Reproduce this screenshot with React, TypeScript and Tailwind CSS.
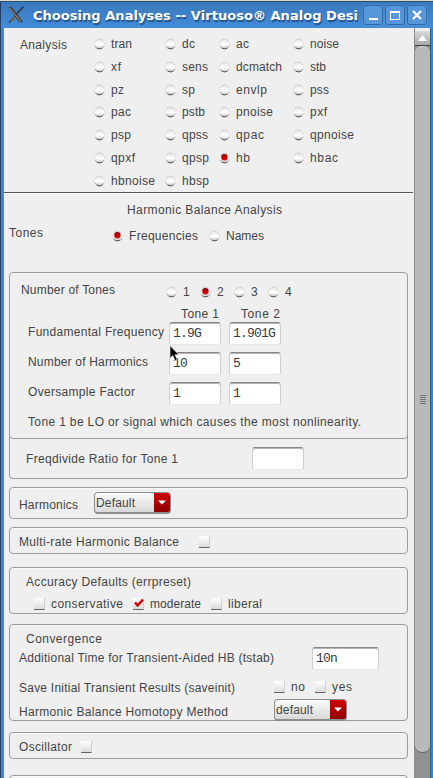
import { useLayoutEffect, useRef, type ReactNode } from "react";

const SANS = "font-['Liberation_Sans',sans-serif] text-[12px] leading-[16px] text-[#444]";
const MONO = "font-['Liberation_Mono',monospace] text-[13px] leading-[18px] tracking-[-0.8px] text-[#3a3a3a]";

/** Single line of text whose tracking is spread to fill the width of its box. */
function Fit({ text, className }: { text: string; className: string }) {
  const box = useRef<HTMLSpanElement>(null);
  const inner = useRef<HTMLSpanElement>(null);
  useLayoutEffect(() => {
    if (!box.current || !inner.current || text.length < 2) return;
    inner.current.style.letterSpacing = "0px";
    const natural = inner.current.getBoundingClientRect().width;
    const gap = (box.current.getBoundingClientRect().width - natural) / (text.length - 1);
    inner.current.style.letterSpacing = `${gap}px`;
  }, [text]);
  return (
    <span ref={box} className={`block shrink-0 whitespace-pre ${className}`}>
      <span ref={inner}>{text}</span>
    </span>
  );
}

function Radio({ on = false }: { on?: boolean }) {
  return (
    <svg className="block h-[12px] w-[11px] shrink-0" viewBox="0 0 11 12">
      <defs>
        <linearGradient id="ball" x1="0" y1="0" x2="0" y2="1">
          <stop offset="0" stopColor="#dcdcdc" />
          <stop offset="0.35" stopColor="#f4f4f4" />
          <stop offset="0.6" stopColor="#ffffff" />
          <stop offset="0.85" stopColor="#dadada" />
          <stop offset="1" stopColor="#9a9a9a" />
        </linearGradient>
        <linearGradient id="dot" x1="0" y1="0" x2="0" y2="1">
          <stop offset="0" stopColor="#8c0000" />
          <stop offset="1" stopColor="#f00000" />
        </linearGradient>
      </defs>
      <circle cx="5.5" cy="5.6" r="5.4" fill="url(#ball)" />
      <path d="M0.5 6.4A5 5 0 0 1 10.5 6.4" fill="none" stroke="#bcbcbc" strokeWidth="0.9" strokeDasharray="1 1" />
      <path d="M0.8 7.8A5.2 5.2 0 0 0 10.2 7.8" fill="none" stroke="#9a9a9a" strokeWidth="0.8" />
      <path d="M2.8 10.2A5.4 5.4 0 0 0 8.2 10.2" fill="none" stroke="#555" strokeWidth="0.9" />
      {on && <circle cx="5.4" cy="5.2" r="3.2" fill="url(#dot)" />}
    </svg>
  );
}

function Check({ on = false, className = "" }: { on?: boolean; className?: string }) {
  return (
    <span
      className={`block h-[12px] w-[11px] shrink-0 border-r border-b border-r-[#d0d0d0] border-b-[#666] bg-linear-to-b from-white to-[#dcdcdc] ${className}`}
    >
      {on && (
        <svg className="block h-[11px] w-[11px]" viewBox="0 0 11 11">
          <path d="M2 4.5L4.6 7.4L10 1.6" fill="none" stroke="#d40000" strokeWidth="2.4" />
        </svg>
      )}
    </span>
  );
}

function Field({ value = "", className }: { value?: string; className: string }) {
  return (
    <div
      className={`h-[23px] shrink-0 rounded-[3px] border border-x-[#cfcfcf] border-t-[#868686] border-b-[#e6e6e6] bg-white pt-[2px] pl-[3px] whitespace-pre shadow-[inset_0_1px_0_#b4b4b4] ${MONO} ${className}`}
    >
      {value}
    </div>
  );
}

function Combo({ value, className, textClass }: { value: string; className: string; textClass: string }) {
  return (
    <div
      className={`flex h-[22px] shrink-0 overflow-hidden rounded-[4px] border border-[#8e8e8e] border-b-2 bg-linear-to-b from-[#fbfbfb] to-[#d9d9d9] ${className}`}
    >
      <div className="min-w-0 flex-1 pt-[2px] pl-[1px]">
        <Fit text={value} className={textClass} />
      </div>
      <div className="flex w-[16px] items-center justify-center bg-linear-to-b from-[#cf0000] to-[#8f0000]">
        <svg className="block h-[5px] w-[8px]" viewBox="0 0 8 5">
          <path d="M0 0.5H8L4 4.5Z" fill="#fff" />
        </svg>
      </div>
    </div>
  );
}

function Group({ className, children }: { className: string; children?: ReactNode }) {
  return (
    <section
      className={`ml-[5px] w-[399px] shrink-0 border border-[#9c9c9c] shadow-[inset_0_1px_0_#f8f8f8] ${className}`}
    >
      {children}
    </section>
  );
}

const analyses: [string, string][][] = [
  [["tran", "w-[21px]"], ["dc", "w-[13px]"], ["ac", "w-[13px]"], ["noise", "w-[29px]"]],
  [["xf", "w-[10px]"], ["sens", "w-[26px]"], ["dcmatch", "w-[46px]"], ["stb", "w-[16px]"]],
  [["pz", "w-[13px]"], ["sp", "w-[13px]"], ["envlp", "w-[31px]"], ["pss", "w-[19px]"]],
  [["pac", "w-[20px]"], ["pstb", "w-[23px]"], ["pnoise", "w-[37px]"], ["pxf", "w-[17px]"]],
  [["psp", "w-[20px]"], ["qpss", "w-[26px]"], ["qpac", "w-[28px]"], ["qpnoise", "w-[44px]"]],
  [["qpxf", "w-[24px]"], ["qpsp", "w-[27px]"], ["hb", "w-[14px]"], ["hbac", "w-[28px]"]],
  [["hbnoise", "w-[44px]"], ["hbsp", "w-[27px]"]],
];

const toneRows: [string, string, string, string][] = [
  ["Fundamental Frequency", "w-[136px]", "1.9G", "1.901G"],
  ["Number of Harmonics", "w-[120px]", "10", "5"],
  ["Oversample Factor", "w-[107px]", "1", "1"],
];

function TitleBar() {
  const button =
    "flex h-[20px] w-[20px] items-center justify-center rounded-[3px] border border-[#2b68a8] bg-[#5796d8] shadow-[0_0_0_1px_rgba(255,255,255,0.08)]";
  return (
    <header className="flex h-[26px] items-start bg-linear-to-b from-[#3a78bb] to-[#438ddb] pt-[3px]">
      <svg className="mt-[1px] ml-[6px] block h-[18px] w-[18px] shrink-0" viewBox="0 0 18 18">
        <path d="M1.2 1.2L4.6 0.9L16 15.5L14.6 16.6L11.6 15.6Z" fill="#3a3a38" />
        <path d="M2.5 1.8L13.8 15.4" stroke="#8d897e" strokeWidth="1.1" />
        <path d="M16.6 0.8L9.6 7.6M8.2 10L2 16.4" stroke="#333" strokeWidth="1.5" />
        <path d="M2.6 16.6L7.2 14.4L8.4 10.6L6.2 10.8Z" fill="#6d6a60" />
      </svg>
      <Fit
        text="Choosing Analyses -- Virtuoso® Analog Desi"
        className="mt-px ml-[8px] w-[325px] font-['DejaVu_Sans',sans-serif] text-[13px] leading-[20px] font-bold text-white [text-shadow:1px_2px_1px_#1f4f86]"
      />
      <div className="ml-[5px] flex gap-[2px]">
        <div className={button}>
          <span className="mt-[8px] block h-[2px] w-[9px] bg-white" />
        </div>
        <div className={button}>
          <span className="block h-[9px] w-[10px] border border-t-2 border-white" />
        </div>
        <div className={button}>
          <svg className="block h-[10px] w-[10px]" viewBox="0 0 10 10">
            <path d="M1 1L9 9M9 1L1 9" stroke="#fff" strokeWidth="2.2" />
          </svg>
        </div>
      </div>
    </header>
  );
}

function ScrollBar() {
  return (
    <div className="flex w-[16px] shrink-0 flex-col border-l border-[#8a8a8a] bg-[#919191]">
      <div className="h-[3px] bg-[#efefef]" />
      <div className="flex h-[15px] items-center justify-center border-b border-[#444] bg-linear-to-b from-[#dadada] to-[#a8a8a8]">
        <svg className="block h-[6px] w-[9px]" viewBox="0 0 9 6">
          <path d="M0 6L4.5 0L9 6Z" fill="#fff" />
        </svg>
      </div>
      <div className="flex h-[707px] flex-col items-center justify-center gap-[1px] rounded-[7px] border-y border-t-[#cfcfcf] border-b-[#666] bg-[#b9b9b9]">
        <span className="block h-px w-[6px] bg-[#777]" />
        <span className="block h-px w-[6px] bg-[#777]" />
        <span className="block h-px w-[6px] bg-[#777]" />
        <span className="block h-px w-[6px] bg-[#777]" />
        <span className="block h-px w-[6px] bg-[#777]" />
      </div>
    </div>
  );
}

export default function App() {
  return (
    <div className="relative flex h-[778px] w-[433px] flex-col overflow-hidden bg-[#3a80cc]">
      <div className="h-px bg-[#d9d5c9]" />
      <div className="h-px bg-[#2a5276]" />
      <div className="flex min-h-0 flex-1 border-l border-[#223f63]">
        <div className="flex w-[432px] shrink-0 flex-col bg-[#3f87d4]">
          <TitleBar />
          <div className={`flex h-[750px] pl-[3px] ${SANS}`}>
            <main className="flex w-[410px] shrink-0 flex-col overflow-hidden bg-[#efefef]">
              <div className="flex h-[164px] shrink-0 items-start pt-[4px]">
                <Fit text="Analysis" className="mt-[5px] ml-[16px] w-[47px]" />
                <div className="ml-[27px] grid grid-cols-[71px_54px_74px_60px] grid-rows-[23px_23px_23px_22px_23px_23px_23px] items-center">
                  {analyses.map((row) =>
                    row.map(([name, width], c) => (
                      <div key={name} className={`flex items-center gap-[6px] ${c === 0 ? "col-start-1" : ""}`}>
                        <Radio on={name === "hb"} />
                        <Fit text={name} className={width} />
                      </div>
                    )),
                  )}
                </div>
              </div>
              <div className="h-[2px] w-[409px] shrink-0 border-t border-b border-t-[#555] border-b-[#fbfbfb]" />

              <Fit text="Harmonic Balance Analysis" className="mt-[8px] ml-[123px] w-[155px]" />
              <div className="mt-[7px] flex h-[20px] shrink-0">
                <Fit text="Tones" className="ml-[5px] w-[34px]" />
                <div className="mt-[3px] ml-[69px] flex h-[16px] items-center">
                  <Radio on />
                  <Fit text="Frequencies" className="ml-[6px] w-[69px]" />
                  <span className="w-[11px]" />
                  <Radio />
                  <Fit text="Names" className="ml-[6px] w-[38px]" />
                </div>
              </div>

              <Group className="mt-[27px] h-[167px] rounded-[4px]">
                <div className="mt-[9px] flex h-[19px]">
                  <Fit text="Number of Tones" className="ml-[11px] w-[94px]" />
                  <div className="mt-[2px] ml-[51px] flex h-[16px] items-center gap-[10px]">
                    {["1", "2", "3", "4"].map((n) => (
                      <div key={n} className="flex w-[24px] items-center gap-[6px]">
                        <Radio on={n === "2"} />
                        <span>{n}</span>
                      </div>
                    ))}
                  </div>
                </div>
                <div className="mt-[5px] flex h-[16px] pl-[171px]">
                  <Fit text="Tone 1" className="w-[38px]" />
                  <Fit text="Tone 2" className="ml-[22px] w-[39px]" />
                </div>
                <div className="flex flex-col gap-[7px]">
                  {toneRows.map(([label, width, a, b]) => (
                    <div key={label} className="flex h-[23px] pl-[18px]">
                      <div className="w-[141px] pt-[2px]">
                        <Fit text={label} className={width} />
                      </div>
                      <Field value={a} className="w-[52px]" />
                      <Field value={b} className="ml-[8px] w-[52px]" />
                    </div>
                  ))}
                </div>
                <Fit
                  text="Tone 1 be LO or signal which causes the most nonlinearity."
                  className="mt-[9px] ml-[18px] w-[333px]"
                />
              </Group>
              <Group className="-mt-[4px] flex h-[44px] items-start rounded-b-[4px] border-t-0 shadow-none">
                <Fit text="Freqdivide Ratio for Tone 1" className="mt-[16px] ml-[16px] w-[152px]" />
                <Field className="mt-[12px] ml-[74px] w-[52px]" />
              </Group>
              <Group className="mt-[8px] flex h-[32px] items-start rounded-[4px]">
                <Fit text="Harmonics" className="mt-[9px] ml-[9px] w-[59px]" />
                <Combo value="Default" className="mt-[4px] ml-[16px] w-[77px]" textClass="w-[39px]" />
              </Group>
              <Group className="mt-[8px] flex h-[27px] items-start rounded-[4px]">
                <Fit text="Multi-rate Harmonic Balance" className="mt-[6px] ml-[9px] w-[160px]" />
                <Check className="mt-[8px] ml-[20px]" />
              </Group>
              <Group className="mt-[13px] h-[47px] rounded-[4px]">
                <Fit text="Accuracy Defaults (errpreset)" className="mt-[6px] ml-[16px] w-[165px]" />
                <div className="mt-[6px] flex h-[16px] items-center pl-[24px]">
                  <Check />
                  <Fit text="conservative" className="ml-[6px] w-[72px]" />
                  <Check on className="ml-[10px]" />
                  <Fit text="moderate" className="ml-[6px] w-[51px]" />
                  <Check className="ml-[10px]" />
                  <Fit text="liberal" className="ml-[6px] w-[34px]" />
                </div>
              </Group>
              <Group className="mt-[10px] h-[97px] rounded-[4px]">
                <Fit text="Convergence" className="mt-[6px] ml-[16px] w-[76px]" />
                <div className="flex h-[26px] pl-[9px]">
                  <Fit text="Additional Time for Transient-Aided HB (tstab)" className="mt-[3px] w-[255px]" />
                  <Field value="10n" className="ml-[38px] w-[67px]" />
                </div>
                <div className="mt-[6px] flex h-[20px] items-start pl-[9px]">
                  <Fit text="Save Initial Transient Results (saveinit)" className="mt-[1px] w-[216px]" />
                  <Check className="mt-[2px] ml-[39px]" />
                  <Fit text="no" className="ml-[6px] w-[14px]" />
                  <Check className="mt-[2px] ml-[10px]" />
                  <Fit text="yes" className="ml-[6px] w-[20px]" />
                </div>
                <div className="flex h-[22px] items-start pl-[9px]">
                  <Fit text="Harmonic Balance Homotopy Method" className="mt-[5px] w-[209px]" />
                  <Combo value="default" className="ml-[46px] w-[73px]" textClass="w-[37px]" />
                </div>
              </Group>
              <Group className="mt-[11px] flex h-[27px] items-start rounded-[4px]">
                <Fit text="Oscillator" className="mt-[6px] ml-[9px] w-[53px]" />
                <Check className="mt-[8px] ml-[9px]" />
              </Group>
              <Group className="mt-[16px] h-[20px] rounded-[4px]" />
            </main>
            <ScrollBar />
            <div className="flex-1 border-l border-[#2b5f96] bg-[#3384d8]" />
          </div>
        </div>
      </div>
      <svg className="absolute top-[345px] left-[169px] h-[18px] w-[12px]" viewBox="0 0 12 18">
        <path
          d="M1 0.5V13.2L3.8 10.6L6 15.6L8.2 14.6L6 9.8H9.8Z"
          fill="#000"
          stroke="#fff"
          strokeWidth="0.6"
        />
      </svg>
    </div>
  );
}
